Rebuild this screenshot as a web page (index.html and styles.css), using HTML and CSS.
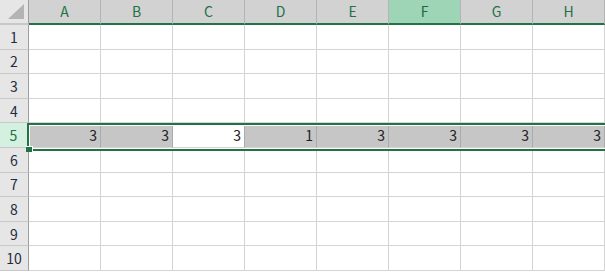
FILE: index.html
```html
<!DOCTYPE html>
<html lang="ja">
<head>
    <meta charset="UTF-8">
    <title>Sheet1</title>
    <link rel="stylesheet" href="styles.css">
</head>
<body>
    <div class="sheet">
        <div class="corner">
            <svg class="corner-mark" width="18" height="16" viewBox="0 0 18 16"><polygon points="17,0 17,15 1,15" fill="#b4b4b4"/></svg>
        </div>
        <div class="col-head">A</div>
        <div class="col-head">B</div>
        <div class="col-head">C</div>
        <div class="col-head">D</div>
        <div class="col-head">E</div>
        <div class="col-head active">F</div>
        <div class="col-head">G</div>
        <div class="col-head">H</div>

        <div class="row-head">1</div>
        <div class="cell"></div><div class="cell"></div><div class="cell"></div><div class="cell"></div><div class="cell"></div><div class="cell"></div><div class="cell"></div><div class="cell"></div>

        <div class="row-head">2</div>
        <div class="cell"></div><div class="cell"></div><div class="cell"></div><div class="cell"></div><div class="cell"></div><div class="cell"></div><div class="cell"></div><div class="cell"></div>

        <div class="row-head">3</div>
        <div class="cell"></div><div class="cell"></div><div class="cell"></div><div class="cell"></div><div class="cell"></div><div class="cell"></div><div class="cell"></div><div class="cell"></div>

        <div class="row-head">4</div>
        <div class="cell"></div><div class="cell"></div><div class="cell"></div><div class="cell"></div><div class="cell"></div><div class="cell"></div><div class="cell"></div><div class="cell"></div>

        <div class="row-head selected">5</div>
        <div class="cell sel">3</div>
        <div class="cell sel">3</div>
        <div class="cell sel current">3</div>
        <div class="cell sel">1</div>
        <div class="cell sel">3</div>
        <div class="cell sel">3</div>
        <div class="cell sel">3</div>
        <div class="cell sel">3</div>

        <div class="row-head">6</div>
        <div class="cell"></div><div class="cell"></div><div class="cell"></div><div class="cell"></div><div class="cell"></div><div class="cell"></div><div class="cell"></div><div class="cell"></div>

        <div class="row-head">7</div>
        <div class="cell"></div><div class="cell"></div><div class="cell"></div><div class="cell"></div><div class="cell"></div><div class="cell"></div><div class="cell"></div><div class="cell"></div>

        <div class="row-head">8</div>
        <div class="cell"></div><div class="cell"></div><div class="cell"></div><div class="cell"></div><div class="cell"></div><div class="cell"></div><div class="cell"></div><div class="cell"></div>

        <div class="row-head">9</div>
        <div class="cell"></div><div class="cell"></div><div class="cell"></div><div class="cell"></div><div class="cell"></div><div class="cell"></div><div class="cell"></div><div class="cell"></div>

        <div class="row-head">10</div>
        <div class="cell"></div><div class="cell"></div><div class="cell"></div><div class="cell"></div><div class="cell"></div><div class="cell"></div><div class="cell"></div><div class="cell"></div>

        <!-- 行選択の枠 -->
        <div class="selection"></div>
        <div class="fill-handle"></div>
    </div>
</body>
</html>
```

FILE: styles.css
```css
* {
    box-sizing: border-box;
}
body {
    margin: 0;
    background-color: #fff;
    font-family: "Noto Sans CJK JP", "Liberation Sans", sans-serif;
    font-size: 14px;
    color: #222;
    overflow: hidden;
}
.sheet {
    position: relative;
    display: grid;
    grid-template-columns: 29px repeat(8, 72px);
    grid-template-rows: 25px repeat(10, 24.6px);
}
.corner {
    background-color: #e6e6e6;
    border-right: 1px solid #9e9e9e;
    border-bottom: 2px solid #c8c8c8;
    position: relative;
}
.corner-mark {
    position: absolute;
    right: 3px;
    bottom: 3px;
}
.col-head {
    display: flex;
    align-items: center;
    justify-content: center;
    background-color: #d2d2d2;
    color: #217346;
    border-right: 1px solid #b4b4b4;
    border-bottom: 2px solid #217346;
    padding-bottom: 1px;
}
.col-head.active {
    background-color: #9fd5b7;
    color: #1b6a44;
}
.row-head {
    display: flex;
    align-items: center;
    justify-content: center;
    background-color: #e6e6e6;
    color: #1f2a44;
    border-right: 1px solid #9e9e9e;
    border-bottom: 1px solid #c8c8c8;
}
.row-head.selected {
    background-color: #d3f0e0;
    color: #217346;
    border-right: 2px solid #217346;
}
.cell {
    border-right: 1px solid #d4d4d4;
    border-bottom: 1px solid #d4d4d4;
    text-align: right;
    padding: 2px 3px 0 0;
    line-height: 20px;
}
.cell.sel {
    background-color: #c6c6c6;
    border-right-color: #ababab;
}
.cell.sel.current {
    background-color: #fff;
}
.selection {
    position: absolute;
    left: 27px;
    right: -4px;
    top: 123px;
    height: 28px;
    border: 2px solid #217346;
    box-shadow: inset 0 0 0 1px #fff;
    pointer-events: none;
}
.fill-handle {
    position: absolute;
    left: 26px;
    top: 146px;
    width: 7px;
    height: 6px;
    background-color: #217346;
    border-top: 1px solid #fff;
    border-right: 1px solid #fff;
}
```
